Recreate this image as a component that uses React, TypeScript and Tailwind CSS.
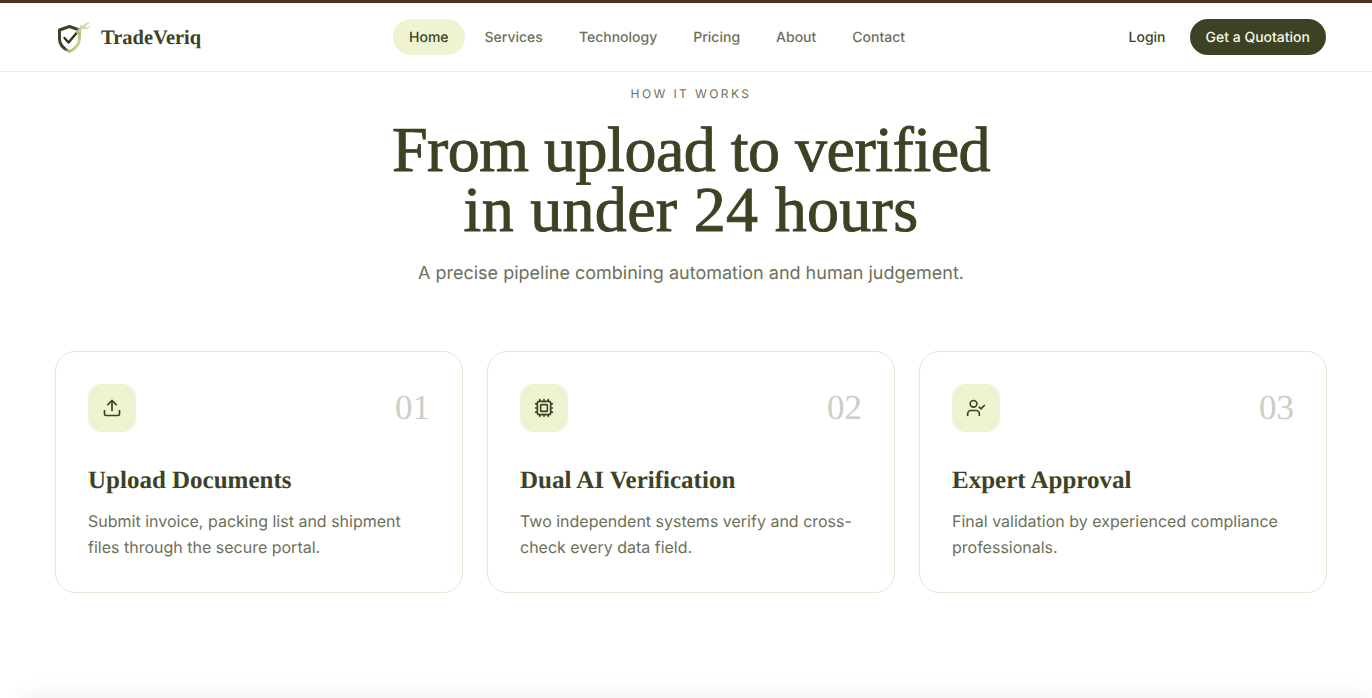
import { Upload, Cpu, UserCheck } from "lucide-react";

const serif = "font-['Liberation_Serif',serif]";

function Logo() {
  return (
    <svg width="36" height="34" viewBox="0 0 36 34" fill="none">
      <defs>
        <linearGradient id="lg" x1="0" y1="0.1" x2="1" y2="0.8">
          <stop offset="0.55" stopColor="#3d4224" />
          <stop offset="0.7" stopColor="#a3b867" />
          <stop offset="1" stopColor="#d3e0a6" />
        </linearGradient>
      </defs>
      <path d="M12.5 6.5 L22.5 10 V19 C22.5 25 18 29 12.5 31.5 C7 29 2.5 25 2.5 19 V10 Z" stroke="url(#lg)" strokeWidth="3" strokeLinejoin="round" />
      <path d="M7.5 18 L11.5 22.5 L20 12.5" stroke="#2e3319" strokeWidth="2.4" strokeLinecap="round" strokeLinejoin="round" />
      <path d="M20 12.5 L30 3.5 M24 9 L24 5.5 M25.5 8 L30 8" stroke="#c5d594" strokeWidth="1.7" strokeLinecap="round" />
      <circle cx="31.5" cy="3" r="1.1" fill="#dbe5b8" />
      <circle cx="32" cy="7" r="1" fill="#dbe5b8" />
    </svg>
  );
}

const links = ["Home", "Services", "Technology", "Pricing", "About", "Contact"];

const cards = [
  { n: "01", t: "Upload Documents", d: ["Submit invoice, packing list and shipment", "files through the secure portal."], i: Upload },
  { n: "02", t: "Dual AI Verification", d: ["Two independent systems verify and cross-", "check every data field."], i: Cpu },
  { n: "03", t: "Expert Approval", d: ["Final validation by experienced compliance", "professionals."], i: UserCheck },
];

export default function App() {
  return (
    <div className="h-[698px] overflow-hidden bg-white font-['Inter',sans-serif] antialiased [text-rendering:geometricPrecision]">
      <div className="h-[3px] bg-[#4f3320]" />
      <header className="h-[69px] border-b border-[#ececec] flex items-center pl-[57px] pr-[46px]">
        <div className="flex items-center gap-[8px] w-[336px]">
          <Logo />
          <span className={`${serif} pt-[2px] text-[20.5px] font-bold text-[#3d4224]`}>TradeVeriq</span>
        </div>
        <nav className="flex items-center gap-1">
          {links.map((l, i) => (
            <a key={l} className={`h-9 px-4 pt-[2px] flex items-center rounded-full text-sm font-medium ${i === 0 ? "bg-[#eef3d2] text-[#3d4224]" : "text-[#6d7059]"}`}>{l}</a>
          ))}
        </nav>
        <div className="ml-auto flex items-center gap-6">
          <a className="pt-[2px] text-sm font-medium text-[#3d4224]">Login</a>
          <a className="h-9 px-4 pt-[2px] flex items-center rounded-full bg-[#3d4224] text-[#f6f7e8] text-sm font-medium">Get a Quotation</a>
        </div>
      </header>
      <main className="ml-[55px] w-[1272px]">
        <div className="text-center text-xs font-normal tracking-[0.2em] text-[#6d7059] leading-4 mt-[14px]">HOW IT WORKS</div>
        <h1 className={`${serif} mt-[18px] text-center text-[64px] leading-[60px] font-normal text-[#3d4224] [-webkit-text-stroke:0.9px_#3d4224]`}>
          <span className="tracking-[-0.5px]">From upload to verified</span><br />
          <span className="tracking-[0.3px]">in under 24 hours</span>
        </h1>
        <p className="mt-[20px] text-center text-lg leading-7 text-[#6d7059]">A precise pipeline combining automation and human judgement.</p>
        <div className="mt-[63px] grid grid-cols-3 gap-6">
          {cards.map((c) => (
            <div key={c.n} className="h-[242px] rounded-[20px] border border-[#e8e8d8] px-8 pt-8">
              <div className="flex items-start justify-between">
                <div className="w-12 h-12 rounded-[14px] bg-[#eef3d2] flex items-center justify-center">
                  <c.i size={20} color="#3d4224" strokeWidth={2} />
                </div>
                <span className={`${serif} pt-[1px] text-[35px] leading-[46px] text-[#cdcdc4]`}>{c.n}</span>
              </div>
              <h3 className={`${serif} mt-[33px] text-[25px] leading-8 font-bold text-[#3d4224]`}>{c.t}</h3>
              <p className="mt-[11px] text-base leading-[26px] text-[#6d7059]">{c.d[0]}<br />{c.d[1]}</p>
            </div>
          ))}
        </div>
      </main>
      <div className="mt-[105px] ml-[20px] h-24 bg-white shadow-[0_-4px_20px_rgba(0,0,0,0.06)]" />
    </div>
  );
}
